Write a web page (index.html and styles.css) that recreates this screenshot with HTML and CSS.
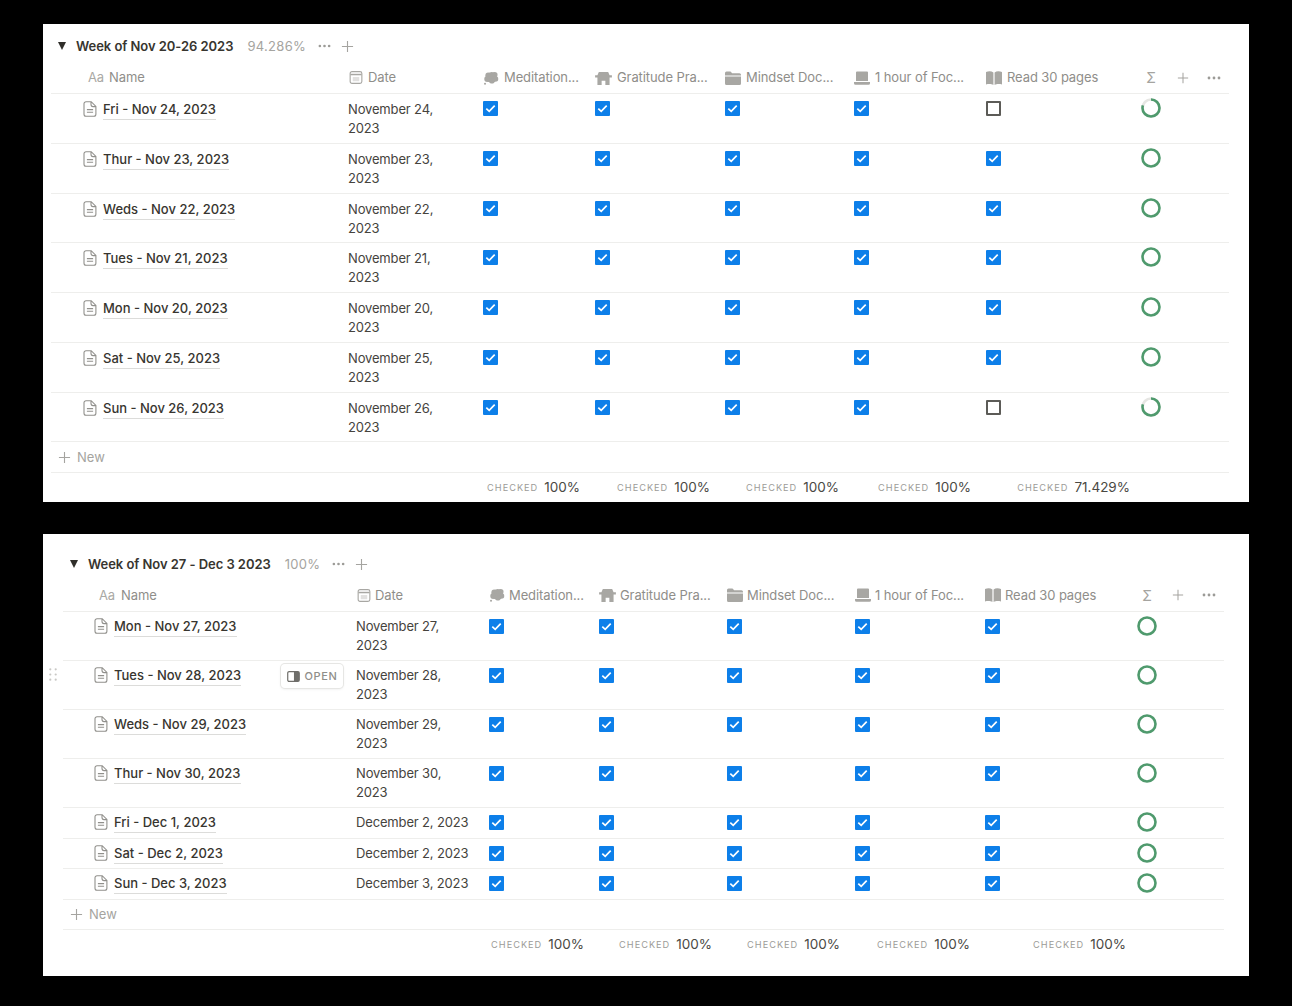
FILE: index.html
```html
<!DOCTYPE html>
<html lang="en">
<head>
<meta charset="utf-8">
<title>Weekly habits</title>
<link rel="stylesheet" href="styles.css">
</head>
<body>
<svg class="defs" aria-hidden="true">
  <symbol id="doc" viewBox="0 0 14 16"><path d="M3 .7h5.200L12.900 5.400V13.300a2 2 0 0 1-2 2H3a2 2 0 0 1-2-2V2.700a2 2 0 0 1 2-2z M8 .9V3.600a2 2 0 0 0 2 2h2.800 M3.900 8.600h6.200 M3.900 11.300h6.200" fill="none" stroke="currentColor" stroke-width="1.100"/></symbol>
  <symbol id="tick" viewBox="0 0 15 15"><path d="M3.300 7.700l2.900 2.700 5.500-5.700" fill="none" stroke="#fff" stroke-width="1.700"/></symbol>
  <symbol id="cal" viewBox="0 0 14 14"><rect x=".7" y=".7" width="12.600" height="12.600" rx="2" fill="none" stroke="currentColor" stroke-width="1.200"/><path d="M1 3h12v1.600H1z" fill="currentColor"/><path d="M3.500 6.500h7v4.500h-7z" fill="currentColor" opacity=".35"/></symbol>
  <symbol id="bubble" viewBox="0 0 16 15"><g fill="currentColor"><circle cx="8.800" cy="6.800" r="5.800"/><circle cx="5" cy="4.500" r="3"/><circle cx="12" cy="4" r="3"/><circle cx="13" cy="8.500" r="2.800"/><circle cx="4" cy="8.500" r="3.200"/><circle cx="9" cy="10.500" r="3"/><circle cx="1.600" cy="13.600" r="1.100"/></g></symbol>
  <symbol id="house" viewBox="0 0 18 15"><path d="M4 1h10l1.500 3.500H18V7h-2.500v8H11v-4.500H7V15H2.500V7H0V4.500h2.500z" fill="currentColor"/></symbol>
  <symbol id="folder" viewBox="0 0 16 14"><path d="M0 2A1.500 1.500 0 0 1 1.500.5h4L7.200 2.300h7.300A1.500 1.500 0 0 1 16 3.800v.7H0z M0 5.500h16v7A1.500 1.500 0 0 1 14.500 14h-13A1.500 1.500 0 0 1 0 12.500z" fill="currentColor"/></symbol>
  <symbol id="laptop" viewBox="0 0 16 14"><path d="M3 .5h10a1 1 0 0 1 1 1v8.500H2V1.500a1 1 0 0 1 1-1z M0 11h16v1.200a1.500 1.500 0 0 1-1.500 1.500h-13A1.500 1.500 0 0 1 0 12.200z" fill="currentColor"/></symbol>
  <symbol id="book" viewBox="0 0 16 14"><path d="M0 1C2.500 0 5.500 0 7.400 1.400V14C5.500 12.700 2.500 12.700 0 13.400z M16 1c-2.500-1-5.500-1-7.400.4V14c1.900-1.300 4.900-1.300 7.400-.6z" fill="currentColor"/></symbol>
  <symbol id="plus" viewBox="0 0 14 14"><path d="M7 1v12M1 7h12" stroke="currentColor" stroke-width="1.200" fill="none"/></symbol>
  <symbol id="dots" viewBox="0 0 14 4"><circle cx="2" cy="2" r="1.400" fill="currentColor"/><circle cx="7" cy="2" r="1.400" fill="currentColor"/><circle cx="12" cy="2" r="1.400" fill="currentColor"/></symbol>
  <symbol id="full" viewBox="0 0 20 20"><circle cx="10" cy="10" r="8.500" fill="none" stroke="#4f9a6d" stroke-width="2.600"/></symbol>
  <symbol id="part" viewBox="0 0 20 20"><circle cx="10" cy="10" r="8.500" fill="none" stroke="#e6e6e3" stroke-width="2.600"/><circle cx="10" cy="10" r="8.500" fill="none" stroke="#4f9a6d" stroke-width="2.600" pathLength="100" stroke-dasharray="80 100" transform="rotate(-90 10 10)"/></symbol>
  <symbol id="panel" viewBox="0 0 14 12"><rect x=".7" y=".7" width="12.600" height="10.600" rx="1.500" fill="none" stroke="currentColor" stroke-width="1.300"/><path d="M7.500 1h5.500v10H7.500z" fill="currentColor"/></symbol>
  <symbol id="grip" viewBox="0 0 8 13"><g fill="currentColor"><circle cx="1.300" cy="1.300" r="1.100"/><circle cx="6.700" cy="1.300" r="1.100"/><circle cx="1.300" cy="6.500" r="1.100"/><circle cx="6.700" cy="6.500" r="1.100"/><circle cx="1.300" cy="11.700" r="1.100"/><circle cx="6.700" cy="11.700" r="1.100"/></g></symbol>
</svg>

<section class="card card-one">
  <div class="group">
    <span class="caret"></span>
    <h2 class="group-title">Week of Nov 20-26 2023</h2>
    <span class="pct">94.286%</span>
    <svg class="i-dots"><use href="#dots"/></svg>
    <svg class="i-plus"><use href="#plus"/></svg>
  </div>
  <div class="table">
    <div class="row head">
      <div class="hcell hname"><span class="aa">Aa</span>Name</div>
      <div class="hcell"><svg class="hi hi-cal"><use href="#cal"/></svg>Date</div>
      <div class="hcell"><svg class="hi"><use href="#bubble"/></svg>Meditation...</div>
      <div class="hcell"><svg class="hi hi-wide"><use href="#house"/></svg>Gratitude Pra...</div>
      <div class="hcell"><svg class="hi"><use href="#folder"/></svg>Mindset Doc...</div>
      <div class="hcell"><svg class="hi"><use href="#laptop"/></svg>1 hour of Foc...</div>
      <div class="hcell"><svg class="hi"><use href="#book"/></svg>Read 30 pages</div>
      <div class="hcell htools"><span class="sigma">Σ</span><svg class="tool"><use href="#plus"/></svg><svg class="tool tool-dots"><use href="#dots"/></svg></div>
    </div>

    <div class="row tall">
      <div class="cell name"><svg class="doc"><use href="#doc"/></svg><span class="title">Fri - Nov 24, 2023</span></div>
      <div class="cell date">November 24, 2023</div>
      <div class="cell box"><span class="check"><svg><use href="#tick"/></svg></span></div>
      <div class="cell box"><span class="check"><svg><use href="#tick"/></svg></span></div>
      <div class="cell box"><span class="check"><svg><use href="#tick"/></svg></span></div>
      <div class="cell box"><span class="check"><svg><use href="#tick"/></svg></span></div>
      <div class="cell box"><span class="uncheck"></span></div>
      <div class="cell ring"><svg><use href="#part"/></svg></div>
    </div>
    <div class="row tall">
      <div class="cell name"><svg class="doc"><use href="#doc"/></svg><span class="title">Thur - Nov 23, 2023</span></div>
      <div class="cell date">November 23, 2023</div>
      <div class="cell box"><span class="check"><svg><use href="#tick"/></svg></span></div>
      <div class="cell box"><span class="check"><svg><use href="#tick"/></svg></span></div>
      <div class="cell box"><span class="check"><svg><use href="#tick"/></svg></span></div>
      <div class="cell box"><span class="check"><svg><use href="#tick"/></svg></span></div>
      <div class="cell box"><span class="check"><svg><use href="#tick"/></svg></span></div>
      <div class="cell ring"><svg><use href="#full"/></svg></div>
    </div>
    <div class="row tall">
      <div class="cell name"><svg class="doc"><use href="#doc"/></svg><span class="title">Weds - Nov 22, 2023</span></div>
      <div class="cell date">November 22, 2023</div>
      <div class="cell box"><span class="check"><svg><use href="#tick"/></svg></span></div>
      <div class="cell box"><span class="check"><svg><use href="#tick"/></svg></span></div>
      <div class="cell box"><span class="check"><svg><use href="#tick"/></svg></span></div>
      <div class="cell box"><span class="check"><svg><use href="#tick"/></svg></span></div>
      <div class="cell box"><span class="check"><svg><use href="#tick"/></svg></span></div>
      <div class="cell ring"><svg><use href="#full"/></svg></div>
    </div>
    <div class="row tall">
      <div class="cell name"><svg class="doc"><use href="#doc"/></svg><span class="title">Tues - Nov 21, 2023</span></div>
      <div class="cell date">November 21, 2023</div>
      <div class="cell box"><span class="check"><svg><use href="#tick"/></svg></span></div>
      <div class="cell box"><span class="check"><svg><use href="#tick"/></svg></span></div>
      <div class="cell box"><span class="check"><svg><use href="#tick"/></svg></span></div>
      <div class="cell box"><span class="check"><svg><use href="#tick"/></svg></span></div>
      <div class="cell box"><span class="check"><svg><use href="#tick"/></svg></span></div>
      <div class="cell ring"><svg><use href="#full"/></svg></div>
    </div>
    <div class="row tall">
      <div class="cell name"><svg class="doc"><use href="#doc"/></svg><span class="title">Mon - Nov 20, 2023</span></div>
      <div class="cell date">November 20, 2023</div>
      <div class="cell box"><span class="check"><svg><use href="#tick"/></svg></span></div>
      <div class="cell box"><span class="check"><svg><use href="#tick"/></svg></span></div>
      <div class="cell box"><span class="check"><svg><use href="#tick"/></svg></span></div>
      <div class="cell box"><span class="check"><svg><use href="#tick"/></svg></span></div>
      <div class="cell box"><span class="check"><svg><use href="#tick"/></svg></span></div>
      <div class="cell ring"><svg><use href="#full"/></svg></div>
    </div>
    <div class="row tall">
      <div class="cell name"><svg class="doc"><use href="#doc"/></svg><span class="title">Sat - Nov 25, 2023</span></div>
      <div class="cell date">November 25, 2023</div>
      <div class="cell box"><span class="check"><svg><use href="#tick"/></svg></span></div>
      <div class="cell box"><span class="check"><svg><use href="#tick"/></svg></span></div>
      <div class="cell box"><span class="check"><svg><use href="#tick"/></svg></span></div>
      <div class="cell box"><span class="check"><svg><use href="#tick"/></svg></span></div>
      <div class="cell box"><span class="check"><svg><use href="#tick"/></svg></span></div>
      <div class="cell ring"><svg><use href="#full"/></svg></div>
    </div>
    <div class="row tall">
      <div class="cell name"><svg class="doc"><use href="#doc"/></svg><span class="title">Sun - Nov 26, 2023</span></div>
      <div class="cell date">November 26, 2023</div>
      <div class="cell box"><span class="check"><svg><use href="#tick"/></svg></span></div>
      <div class="cell box"><span class="check"><svg><use href="#tick"/></svg></span></div>
      <div class="cell box"><span class="check"><svg><use href="#tick"/></svg></span></div>
      <div class="cell box"><span class="check"><svg><use href="#tick"/></svg></span></div>
      <div class="cell box"><span class="uncheck"></span></div>
      <div class="cell ring"><svg><use href="#part"/></svg></div>
    </div>

    <div class="new"><svg class="i-plus"><use href="#plus"/></svg>New</div>
    <div class="row foot">
      <div></div><div></div>
      <div class="calc"><span class="calc-label">CHECKED</span>100%</div>
      <div class="calc"><span class="calc-label">CHECKED</span>100%</div>
      <div class="calc"><span class="calc-label">CHECKED</span>100%</div>
      <div class="calc"><span class="calc-label">CHECKED</span>100%</div>
      <div class="calc"><span class="calc-label">CHECKED</span>71.429%</div>
      <div></div>
    </div>
  </div>
</section>

<section class="card card-two">
  <div class="group">
    <span class="caret"></span>
    <h2 class="group-title">Week of Nov 27 - Dec 3 2023</h2>
    <span class="pct">100%</span>
    <svg class="i-dots"><use href="#dots"/></svg>
    <svg class="i-plus"><use href="#plus"/></svg>
  </div>
  <div class="table">
    <div class="row head">
      <div class="hcell hname"><span class="aa">Aa</span>Name</div>
      <div class="hcell"><svg class="hi hi-cal"><use href="#cal"/></svg>Date</div>
      <div class="hcell"><svg class="hi"><use href="#bubble"/></svg>Meditation...</div>
      <div class="hcell"><svg class="hi hi-wide"><use href="#house"/></svg>Gratitude Pra...</div>
      <div class="hcell"><svg class="hi"><use href="#folder"/></svg>Mindset Doc...</div>
      <div class="hcell"><svg class="hi"><use href="#laptop"/></svg>1 hour of Foc...</div>
      <div class="hcell"><svg class="hi"><use href="#book"/></svg>Read 30 pages</div>
      <div class="hcell htools"><span class="sigma">Σ</span><svg class="tool"><use href="#plus"/></svg><svg class="tool tool-dots"><use href="#dots"/></svg></div>
    </div>

    <div class="row tall">
      <div class="cell name"><svg class="doc"><use href="#doc"/></svg><span class="title">Mon - Nov 27, 2023</span></div>
      <div class="cell date">November 27, 2023</div>
      <div class="cell box"><span class="check"><svg><use href="#tick"/></svg></span></div>
      <div class="cell box"><span class="check"><svg><use href="#tick"/></svg></span></div>
      <div class="cell box"><span class="check"><svg><use href="#tick"/></svg></span></div>
      <div class="cell box"><span class="check"><svg><use href="#tick"/></svg></span></div>
      <div class="cell box"><span class="check"><svg><use href="#tick"/></svg></span></div>
      <div class="cell ring"><svg><use href="#full"/></svg></div>
    </div>
    <div class="row tall hovered">
      <svg class="grip"><use href="#grip"/></svg>
      <div class="cell name"><svg class="doc"><use href="#doc"/></svg><span class="title">Tues - Nov 28, 2023</span></div>
      <div class="cell date">November 28, 2023</div>
      <div class="cell box"><span class="check"><svg><use href="#tick"/></svg></span></div>
      <div class="cell box"><span class="check"><svg><use href="#tick"/></svg></span></div>
      <div class="cell box"><span class="check"><svg><use href="#tick"/></svg></span></div>
      <div class="cell box"><span class="check"><svg><use href="#tick"/></svg></span></div>
      <div class="cell box"><span class="check"><svg><use href="#tick"/></svg></span></div>
      <div class="cell ring"><svg><use href="#full"/></svg></div>
      <div class="open"><svg><use href="#panel"/></svg>OPEN</div>
    </div>
    <div class="row tall">
      <div class="cell name"><svg class="doc"><use href="#doc"/></svg><span class="title">Weds - Nov 29, 2023</span></div>
      <div class="cell date">November 29, 2023</div>
      <div class="cell box"><span class="check"><svg><use href="#tick"/></svg></span></div>
      <div class="cell box"><span class="check"><svg><use href="#tick"/></svg></span></div>
      <div class="cell box"><span class="check"><svg><use href="#tick"/></svg></span></div>
      <div class="cell box"><span class="check"><svg><use href="#tick"/></svg></span></div>
      <div class="cell box"><span class="check"><svg><use href="#tick"/></svg></span></div>
      <div class="cell ring"><svg><use href="#full"/></svg></div>
    </div>
    <div class="row tall">
      <div class="cell name"><svg class="doc"><use href="#doc"/></svg><span class="title">Thur - Nov 30, 2023</span></div>
      <div class="cell date">November 30, 2023</div>
      <div class="cell box"><span class="check"><svg><use href="#tick"/></svg></span></div>
      <div class="cell box"><span class="check"><svg><use href="#tick"/></svg></span></div>
      <div class="cell box"><span class="check"><svg><use href="#tick"/></svg></span></div>
      <div class="cell box"><span class="check"><svg><use href="#tick"/></svg></span></div>
      <div class="cell box"><span class="check"><svg><use href="#tick"/></svg></span></div>
      <div class="cell ring"><svg><use href="#full"/></svg></div>
    </div>
    <div class="row short">
      <div class="cell name"><svg class="doc"><use href="#doc"/></svg><span class="title">Fri - Dec 1, 2023</span></div>
      <div class="cell date">December 2, 2023</div>
      <div class="cell box"><span class="check"><svg><use href="#tick"/></svg></span></div>
      <div class="cell box"><span class="check"><svg><use href="#tick"/></svg></span></div>
      <div class="cell box"><span class="check"><svg><use href="#tick"/></svg></span></div>
      <div class="cell box"><span class="check"><svg><use href="#tick"/></svg></span></div>
      <div class="cell box"><span class="check"><svg><use href="#tick"/></svg></span></div>
      <div class="cell ring"><svg><use href="#full"/></svg></div>
    </div>
    <div class="row short">
      <div class="cell name"><svg class="doc"><use href="#doc"/></svg><span class="title">Sat - Dec 2, 2023</span></div>
      <div class="cell date">December 2, 2023</div>
      <div class="cell box"><span class="check"><svg><use href="#tick"/></svg></span></div>
      <div class="cell box"><span class="check"><svg><use href="#tick"/></svg></span></div>
      <div class="cell box"><span class="check"><svg><use href="#tick"/></svg></span></div>
      <div class="cell box"><span class="check"><svg><use href="#tick"/></svg></span></div>
      <div class="cell box"><span class="check"><svg><use href="#tick"/></svg></span></div>
      <div class="cell ring"><svg><use href="#full"/></svg></div>
    </div>
    <div class="row short">
      <div class="cell name"><svg class="doc"><use href="#doc"/></svg><span class="title">Sun - Dec 3, 2023</span></div>
      <div class="cell date">December 3, 2023</div>
      <div class="cell box"><span class="check"><svg><use href="#tick"/></svg></span></div>
      <div class="cell box"><span class="check"><svg><use href="#tick"/></svg></span></div>
      <div class="cell box"><span class="check"><svg><use href="#tick"/></svg></span></div>
      <div class="cell box"><span class="check"><svg><use href="#tick"/></svg></span></div>
      <div class="cell box"><span class="check"><svg><use href="#tick"/></svg></span></div>
      <div class="cell ring"><svg><use href="#full"/></svg></div>
    </div>

    <div class="new"><svg class="i-plus"><use href="#plus"/></svg>New</div>
    <div class="row foot">
      <div></div><div></div>
      <div class="calc"><span class="calc-label">CHECKED</span>100%</div>
      <div class="calc"><span class="calc-label">CHECKED</span>100%</div>
      <div class="calc"><span class="calc-label">CHECKED</span>100%</div>
      <div class="calc"><span class="calc-label">CHECKED</span>100%</div>
      <div class="calc"><span class="calc-label">CHECKED</span>100%</div>
      <div></div>
    </div>
  </div>
</section>
</body>
</html>
```
FILE: styles.css
```css
* { box-sizing: border-box; }

html, body { background: #000; }

body {
  margin: 0;
  padding: 24px 43px 30px;
  display: flex;
  flex-direction: column;
  gap: 32px;
  font-family: Inter, "Liberation Sans", sans-serif;
  font-size: 13px;
  line-height: 19px;
  color: #37352f;
}

.defs { display: none; }

.card { background: #fff; width: 1206px; }

.card-one {
  height: 478px;
  padding: 10px 20px 0 8px;
  --cols: 289px 135px 112px 130px 129px 132px 159px 92px;
  --tall: 49.75px;
  --hgap: 5px;
  --cell-top: 6px;
  --tool-gap: 11.5px;
  --doc-left: 32px;
  --aa-gap: 0;
}

.card-two {
  height: 442px;
  padding: 18px 25px 0 20px;
  --cols: 285px 133px 110px 128px 128px 130px 156px 91px;
  --tall: 49px;
  --hgap: 4px;
  --cell-top: 5px;
  --tool-gap: 11px;
  --doc-left: 31px;
  --aa-gap: 2px;
}

.group {
  height: 24px;
  display: flex;
  align-items: center;
  padding-left: 7px;
}

.caret {
  width: 0;
  height: 0;
  border-left: 4.5px solid transparent;
  border-right: 4.5px solid transparent;
  border-top: 8px solid #2f2e2a;
  margin-right: 10px;
}

.group-title {
  margin: 0;
  font-size: 13px;
  font-weight: 600;
  letter-spacing: -.05px;
  color: #37352f;
}

.pct { margin-left: 14px; color: #a5a4a0; letter-spacing: .3px; }

.i-dots { width: 13px; height: 4px; margin-left: 12px; color: #9c9b97; }
.i-plus { width: 13px; height: 13px; margin-left: 10px; color: #a5a4a0; }

.table { margin-top: 4px; }
.card-two .table { margin-top: 3px; }

.row {
  position: relative;
  display: grid;
  grid-template-columns: var(--cols);
  border-bottom: 1px solid #eeeeec;
}

.head { height: 32px; color: #8f8e8a; }
.card-two .head { height: 33px; }
.tall { height: var(--tall); }
.short { height: 30.6px; }

.hcell {
  display: flex;
  align-items: center;
  gap: var(--hgap);
  padding-left: 8px;
  letter-spacing: -.1px;
  white-space: nowrap;
}

.hname { padding-left: 37px; }
.card-two .hname { padding-left: 36px; }

.aa { color: #aaa9a5; font-size: 13px; margin-right: var(--aa-gap); }

.hi { width: 16px; height: 14px; color: #a8a7a3; flex: none; }
.hi-wide { width: 17px; }
.hi-cal { width: 14px; height: 13px; margin-left: 1px; }

.htools { padding-left: 4px; gap: var(--tool-gap); }
.sigma { width: 20px; text-align: center; color: #a5a4a0; font-size: 14px; }
.tool { width: 20px; height: 12px; color: #a5a4a0; }
.tool-dots { height: 4px; color: #9c9b97; }

.cell { padding: var(--cell-top) 8px 0; }

.name { display: flex; align-items: flex-start; gap: 6px; padding-left: var(--doc-left); }

.doc { width: 14px; height: 16px; margin-top: 1px; color: #91908c; flex: none; }

.title {
  font-weight: 500;
  border-bottom: 1px solid #dcdcda;
  line-height: 19px;
}

.cell.date { color: #45433d; letter-spacing: -.15px; padding-right: 12px; }

.cell.box { padding-top: 7px; }

.check, .uncheck { display: block; width: 15px; height: 15px; }
.check { background: #0d7fe9; border-radius: 1px; }
.check svg { display: block; width: 15px; height: 15px; }
.uncheck { border: 2px solid #5c5b57; border-radius: 1px; }

.cell.ring { padding: 4px 0 0 4px; }
.ring svg { display: block; width: 20px; height: 20px; }

.new {
  height: 31px;
  display: flex;
  align-items: center;
  gap: 6px;
  padding-left: 7px;
  color: #a5a4a0;
  border-bottom: 1px solid #eeeeec;
}
.card-two .new { height: 30.5px; }
.new .i-plus { margin-left: 0; }

.foot { border-bottom: 0; height: 30px; }

.calc {
  display: flex;
  align-items: center;
  justify-content: flex-end;
  gap: 6px;
  padding: 0 7px 2px 0;
  font-size: 13.5px;
  color: #4a4843;
}

.calc-label {
  font-size: 9.2px;
  letter-spacing: 1px;
  color: #9c9b97;
}

.grip {
  position: absolute;
  left: -14px;
  top: 7px;
  width: 8px;
  height: 13px;
  color: #c9c8c5;
}

.open {
  position: absolute;
  left: 218px;
  top: 3px;
  width: 62px;
  height: 24px;
  display: flex;
  align-items: center;
  justify-content: center;
  gap: 5px;
  background: #fff;
  border-radius: 4px;
  box-shadow: 0 0 0 1px #e6e6e4, 0 1px 3px rgba(15, 15, 15, .1);
  font-size: 11px;
  font-weight: 500;
  letter-spacing: .6px;
  color: #8f8e8a;
}
.open svg { width: 13px; height: 11px; color: #6f6e6a; }
```
